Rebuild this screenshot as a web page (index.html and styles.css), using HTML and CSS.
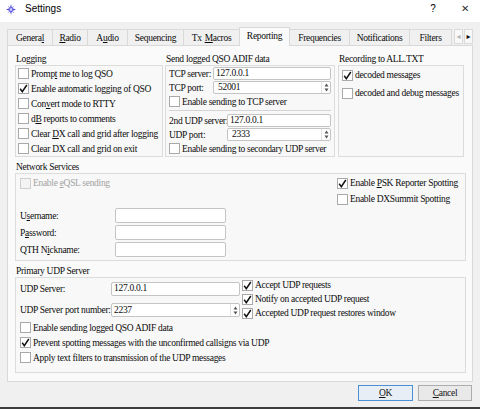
FILE: index.html
```html
<!DOCTYPE html>
<html>
<head>
<meta charset="utf-8">
<title>Settings</title>
<link rel="stylesheet" href="styles.css">
</head>
<body>
<div class="window">
  <div class="titlebar">
    <svg class="appicon" width="10" height="11" viewBox="0 0 10 11">
      <path d="M5 0 L6 4 L10 5.5 L6 7 L5 11 L4 7 L0 5.5 L4 4 Z" fill="#4a4fd6"/>
      <path d="M1.5 1.5 L5 4.5 L8.5 1.5 L5.8 5.5 L8.5 9.5 L5 6.5 L1.5 9.5 L4.2 5.5 Z" fill="#7a6be8"/>
      <circle cx="5" cy="5.5" r="1.3" fill="#d8d6ff"/>
    </svg>
    <span class="title">Settings</span>
    <span class="tb-help">?</span>
    <span class="tb-close">✕</span>
  </div>

  <div class="content">
    <div class="tabs">
      <div class="tab w-general">Genera<u>l</u></div>
      <div class="tab w-radio"><u>R</u>adio</div>
      <div class="tab w-audio">A<u>u</u>dio</div>
      <div class="tab w-seq">Sequencing</div>
      <div class="tab w-tx"><span>Tx</span><span class="tx-gap"><u>M</u>acros</span></div>
      <div class="tab tab-active w-rep">Reporting</div>
      <div class="tab w-freq">Frequencies</div>
      <div class="tab w-notif">Notifications</div>
      <div class="tab w-filt">Filters</div>
      <div class="tab-scroll">
        <span class="ts-btn ts-dis">&#9666;</span>
        <span class="ts-btn">&#9656;</span>
      </div>
    </div>

    <div class="panel">
      <div class="row-top">
        <div class="group g-logging">
          <div class="gtitle">Logging</div>
          <div class="gbox gb-logging">
            <label class="cb"><span class="box"></span><span>Promp<u>t</u> me to log QSO</span></label>
            <label class="cb"><span class="box on"><svg width="9" height="9" viewBox="0 0 9 9"><path d="M1.2 4.8 L3.3 7.6 L7.8 1" fill="none" stroke="#111" stroke-width="1.5"/></svg></span><span>Enable automatic logging of QSO</span></label>
            <label class="cb"><span class="box"></span><span>Con<u>v</u>ert mode to RTTY</span></label>
            <label class="cb"><span class="box"></span><span>d<u>B</u> reports to comments</span></label>
            <label class="cb"><span class="box"></span><span>Clear <u>D</u>X call and grid after logging</span></label>
            <label class="cb"><span class="box"></span><span>Clear DX call and grid on exit</span></label>
          </div>
        </div>

        <div class="group g-send">
          <div class="gtitle">Send logged QSO ADIF data</div>
          <div class="gbox gb-send">
            <div class="fgrid fg-tcp">
              <span class="lbl">TCP server:</span>
              <div class="input"><span>127.0.0.1</span></div>
              <span class="lbl">TCP port:</span>
              <div class="input spin"><span class="sv">52001</span><span class="arrows"><svg width="5" height="9" viewBox="0 0 5 9"><path d="M2.5 0.5 L4.5 3.5 L0.5 3.5 Z M2.5 8.5 L4.5 5.5 L0.5 5.5 Z" fill="#555"/></svg></span></div>
            </div>
            <label class="cb"><span class="box"></span><span>Enable sending to TCP server</span></label>
            <div class="sep"></div>
            <div class="fgrid fg-udp">
              <span class="lbl">2nd UDP server:</span>
              <div class="input"><span>127.0.0.1</span></div>
              <span class="lbl">UDP port:</span>
              <div class="input spin"><span class="sv">2333</span><span class="arrows"><svg width="5" height="9" viewBox="0 0 5 9"><path d="M2.5 0.5 L4.5 3.5 L0.5 3.5 Z M2.5 8.5 L4.5 5.5 L0.5 5.5 Z" fill="#555"/></svg></span></div>
            </div>
            <label class="cb"><span class="box"></span><span>Enable sending to secondary UDP server</span></label>
          </div>
        </div>

        <div class="group g-rec">
          <div class="gtitle">Recording to ALL.TXT</div>
          <div class="gbox gb-rec">
            <label class="cb"><span class="box on"><svg width="9" height="9" viewBox="0 0 9 9"><path d="M1.2 4.8 L3.3 7.6 L7.8 1" fill="none" stroke="#111" stroke-width="1.5"/></svg></span><span>decoded messages</span></label>
            <label class="cb"><span class="box"></span><span>decoded and debug messages</span></label>
          </div>
        </div>
      </div>

      <div class="group g-net">
        <div class="gtitle">Network Services</div>
        <div class="gbox gb-net">
          <div class="net-left">
            <label class="cb dis"><span class="box"></span><span>Enable <u>e</u>QSL sending</span></label>
            <div class="fgrid fg-net">
              <span class="lbl">U<u>s</u>ername:</span>
              <div class="input tall"></div>
              <span class="lbl">P<u>a</u>ssword:</span>
              <div class="input tall"></div>
              <span class="lbl">QTH N<u>i</u>ckname:</span>
              <div class="input tall"></div>
            </div>
          </div>
          <div class="net-right">
            <label class="cb"><span class="box on"><svg width="9" height="9" viewBox="0 0 9 9"><path d="M1.2 4.8 L3.3 7.6 L7.8 1" fill="none" stroke="#111" stroke-width="1.5"/></svg></span><span>Enable <u>P</u>SK Reporter Spotting</span></label>
            <label class="cb"><span class="box"></span><span>Enable DXSummit Spotting</span></label>
          </div>
        </div>
      </div>

      <div class="group g-prim">
        <div class="gtitle">Primary UDP Server</div>
        <div class="gbox gb-prim">
          <div class="prim-top">
            <div class="fgrid fg-prim">
              <span class="lbl">UDP Server:</span>
              <div class="input mid"><span>127.0.0.1</span></div>
              <span class="lbl">UDP Server port number:</span>
              <div class="input mid spin"><span class="sv sv2">2237</span><span class="arrows"><svg width="5" height="9" viewBox="0 0 5 9"><path d="M2.5 0.5 L4.5 3.5 L0.5 3.5 Z M2.5 8.5 L4.5 5.5 L0.5 5.5 Z" fill="#555"/></svg></span></div>
            </div>
            <div class="prim-right">
              <label class="cb"><span class="box on"><svg width="9" height="9" viewBox="0 0 9 9"><path d="M1.2 4.8 L3.3 7.6 L7.8 1" fill="none" stroke="#111" stroke-width="1.5"/></svg></span><span>Accept UDP requests</span></label>
              <label class="cb"><span class="box on"><svg width="9" height="9" viewBox="0 0 9 9"><path d="M1.2 4.8 L3.3 7.6 L7.8 1" fill="none" stroke="#111" stroke-width="1.5"/></svg></span><span>Notify on accepted UDP request</span></label>
              <label class="cb"><span class="box on"><svg width="9" height="9" viewBox="0 0 9 9"><path d="M1.2 4.8 L3.3 7.6 L7.8 1" fill="none" stroke="#111" stroke-width="1.5"/></svg></span><span>Accepted UDP request restores window</span></label>
            </div>
          </div>
          <label class="cb"><span class="box"></span><span>Enable sending logged QSO ADIF data</span></label>
          <label class="cb"><span class="box on"><svg width="9" height="9" viewBox="0 0 9 9"><path d="M1.2 4.8 L3.3 7.6 L7.8 1" fill="none" stroke="#111" stroke-width="1.5"/></svg></span><span>Prevent spotting messages with the unconfirmed callsigns via UDP</span></label>
          <label class="cb"><span class="box"></span><span>Apply text filters to transmission of the UDP messages</span></label>
        </div>
      </div>
    </div>

    <div class="footer">
      <button class="btn btn-ok"><u>O</u>K</button>
      <button class="btn btn-cancel"><u>C</u>ancel</button>
    </div>
  </div>
</div>
</body>
</html>
```

FILE: styles.css
```css
* { box-sizing: border-box; }
html, body { margin: 0; padding: 0; }
body {
  width: 480px;
  height: 409px;
  overflow: hidden;
  background: #f0f0f0;
  font-family: "Liberation Serif", "Times New Roman", serif;
  font-size: 9.5px;
  letter-spacing: -0.3px;
  color: #0c0c0c;
}
u { text-decoration: underline; text-underline-offset: 1px; }

.window {
  height: 409px;
  display: flex;
  flex-direction: column;
  border-bottom: 2px solid #3c3c3c;
}

/* title bar */
.titlebar {
  height: 22px;
  flex: none;
  background: #ffffff;
  display: flex;
  align-items: flex-start;
  padding: 3px 0 0 6px;
  font-family: "Liberation Sans", Arial, sans-serif;
  font-size: 10px;
  letter-spacing: 0;
  color: #000;
  line-height: 12px;
}
.appicon { margin: 1px 0 0 0; flex: none; }
.title { margin-left: 9px; }
.tb-help { margin-left: auto; width: 10px; text-align: center; font-size: 10px; }
.tb-close { margin: 0 10px 0 22px; width: 10px; text-align: center; font-size: 10px; color: #333; }

/* content area */
.content {
  flex: 1;
  display: flex;
  flex-direction: column;
  padding: 5px 7px 0 7px;
}

/* tabs */
.tabs {
  height: 18px;
  display: flex;
  align-items: flex-end;
  flex: none;
}
.tab {
  height: 16px;
  border: 1px solid #d9d9d9;
  border-bottom: none;
  margin-right: -1px;
  background: #f0f0f0;
  display: flex;
  align-items: center;
  justify-content: center;
  line-height: 12px;
  white-space: nowrap;
}
.tx-gap { margin-left: 3px; }
.tab-active {
  height: 19px;
  margin-bottom: -1px;
  background: #fafafa;
  position: relative;
  z-index: 1;
  padding-bottom: 2px;
}
.w-general { width: 46px; }
.w-radio { width: 36px; }
.w-audio { width: 41px; }
.w-seq { width: 57px; }
.w-tx { width: 57px; }
.w-rep { width: 51px; }
.w-freq { width: 61px; }
.w-notif { width: 61px; }
.w-filt { width: 43px; }
.tab-scroll {
  display: flex;
  margin-left: 3px;
  margin-bottom: 1px;
  gap: 1px;
}
.ts-btn {
  width: 9px;
  height: 15px;
  border: 1px solid #dadada;
  background: #f8f8f8;
  font-size: 8px;
  letter-spacing: 0;
  display: flex;
  align-items: center;
  justify-content: center;
  color: #111;
  font-family: "DejaVu Sans", sans-serif;
}
.ts-dis { color: #b5b5b5; }

/* panel */
.panel {
  width: 466px;
  height: 337px;
  flex: none;
  border: 1px solid #d9d9d9;
  background: #fafafa;
  padding: 7px 5px 0 7px;
  display: flex;
  flex-direction: column;
}
.row-top { display: flex; }
.group { display: flex; flex-direction: column; }
.gtitle {
  height: 12px;
  line-height: 12px;
  padding-left: 1px;
  white-space: nowrap;
}
.gbox {
  border: 1px solid #dcdcdc;
  background: #f8f8f8;
}
.g-logging { width: 148px; margin-right: 2px; }
.g-send { width: 170px; margin-right: 3px; }
.g-rec { width: 126px; }
.gb-logging { height: 92px; padding: 0 0 0 2px; }
.gb-send { height: 92px; padding: 1px 3px 0 3px; }
.gb-rec { height: 92px; padding: 2px 3px 0 3px; display: flex; flex-direction: column; gap: 4px; }
.gb-rec .cb { height: 14px; }

.g-net { margin-top: 4px; width: 451px; }
.gb-net { height: 88px; display: flex; }
.net-left { width: 321px; padding: 2px 0 0 4px; }
.net-right { padding-top: 2px; display: flex; flex-direction: column; gap: 2px; }
.net-left .cb, .net-right .cb { height: 14px; }

.g-prim { margin-top: 4px; width: 451px; }
.gb-prim { height: 96px; padding: 0 0 0 4px; }
.prim-top { display: flex; height: 42px; }
.prim-right { margin-left: 2px; display: flex; flex-direction: column; }
.prim-right .cb { height: 14px; }

/* checkbox */
.cb {
  display: flex;
  align-items: center;
  height: 15px;
  white-space: nowrap;
  line-height: 12px;
}
.cb .box {
  width: 11px;
  height: 11px;
  border: 1px solid #a9a9a9;
  background: #ffffff;
  margin-right: 2px;
  flex: none;
  display: flex;
  align-items: center;
  justify-content: center;
}
.cb.dis { color: #a3a3a3; }
.cb.dis .box { border-color: #cfcfcf; background: #f3f3f3; }

/* form grids */
.fgrid {
  display: grid;
  row-gap: 1px;
  column-gap: 2px;
  align-items: center;
}
.fg-tcp { grid-template-columns: 42px 118px; }
.fg-udp { grid-template-columns: 56px 104px; }
.fg-net { grid-template-columns: 95px 111px; row-gap: 2px; column-gap: 0; margin-top: 18px; }
.fg-prim { grid-template-columns: 91px 129px; row-gap: 2px; column-gap: 0; margin-top: 1px; }
.lbl { white-space: nowrap; line-height: 12px; }

.input {
  height: 13px;
  background: #ffffff;
  border: 1px solid #c4c4c4;
  border-radius: 2px;
  display: flex;
  align-items: center;
  padding-left: 2px;
  line-height: 11px;
}
.input.tall { height: 15px; }
.input.mid { height: 14px; }
.spin { padding-left: 0; }
.spin .sv { flex: 1; padding-left: 4px; }
.spin .sv2 { padding-left: 2px; }
.arrows {
  width: 9px;
  height: 100%;
  border-left: 1px solid #e2e2e2;
  display: flex;
  align-items: center;
  justify-content: center;
}

.sep {
  border-top: 1px solid #d4d4d4;
  margin: 1px 0 3px 0;
}

/* footer */
.footer {
  display: flex;
  justify-content: flex-end;
  gap: 5px;
  margin-top: 3px;
  padding-right: 1px;
}
.btn {
  height: 16px;
  font-family: "Liberation Serif", "Times New Roman", serif;
  font-size: 9.5px;
  letter-spacing: -0.3px;
  color: #141414;
  background: #e9e9e9;
  border: 1px solid #adadad;
  padding: 0;
  line-height: 12px;
}
.btn-ok { width: 55px; border-color: #4a90d6; background: #e8eef5; }
.btn-cancel { width: 54px; }
```
